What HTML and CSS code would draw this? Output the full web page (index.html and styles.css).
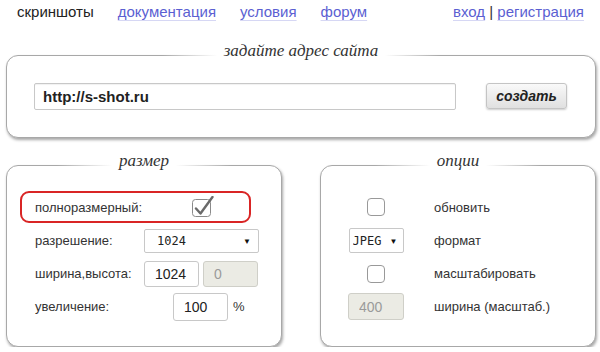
FILE: index.html
```html
<!DOCTYPE html>
<html lang="ru">
<head>
    <meta charset="UTF-8">
    <meta name="viewport" content="width=device-width, initial-scale=1.0">
    <title>s-shot.ru</title>
    <link rel="stylesheet" href="styles.css">
</head>
<body>
    <div class="nav">
        <div class="menu">
            <span class="current">скриншоты</span>
            <a href="#">документация</a>
            <a href="#">условия</a>
            <a href="#">форум</a>
        </div>
        <div class="auth"><a href="#">вход</a> | <a href="#">регистрация</a></div>
    </div>

    <div class="page">
        <div class="box">
            <div class="box-title">задайте адрес сайта</div>
            <div class="url-row">
                <input class="url-input" type="text" value="http://s-shot.ru">
                <button class="btn-create">создать</button>
            </div>
        </div>

        <div class="columns">
            <!-- size -->
            <div class="box box-size">
                <div class="box-title">размер</div>
                <div class="row row-hl">
                    <span class="label">полноразмерный:</span>
                    <span class="check">
                        <svg width="24" height="22" viewBox="0 0 24 22">
                            <rect x="2.5" y="3.5" width="18" height="17" rx="3" fill="#fff" stroke="#8a8a8a"/>
                            <path d="M6 12.5 L10.5 17.5 L22.5 1" fill="none" stroke="#6a6a6a" stroke-width="2.4" stroke-linecap="round" stroke-linejoin="round"/>
                        </svg>
                    </span>
                </div>
                <div class="row">
                    <span class="label">разрешение:</span>
                    <div class="select select-res">
                        <select><option>1024</option></select>
                    </div>
                </div>
                <div class="row">
                    <span class="label">ширина,высота:</span>
                    <input class="field field-w" type="text" value="1024">
                    <input class="field field-h" type="text" value="0" disabled>
                </div>
                <div class="row">
                    <span class="label">увеличение:</span>
                    <input class="field field-zoom" type="text" value="100">
                    <span class="unit">%</span>
                </div>
            </div>

            <!-- options -->
            <div class="box box-opts">
                <div class="box-title">опции</div>
                <div class="row row-first">
                    <div class="ctrl"><input class="cb" type="checkbox"></div>
                    <span class="opt-label">обновить</span>
                </div>
                <div class="row">
                    <div class="ctrl">
                        <div class="select select-fmt">
                            <select><option>JPEG</option></select>
                        </div>
                    </div>
                    <span class="opt-label">формат</span>
                </div>
                <div class="row">
                    <div class="ctrl"><input class="cb" type="checkbox"></div>
                    <span class="opt-label">масштабировать</span>
                </div>
                <div class="row">
                    <div class="ctrl"><input class="field field-scale" type="text" value="400" disabled></div>
                    <span class="opt-label">ширина (масштаб.)</span>
                </div>
            </div>
        </div>
    </div>
</body>
</html>
```

FILE: styles.css
```css
body {
    margin: 0;
    font-family: "Liberation Sans", Arial, sans-serif;
    color: #333;
    background: #fff;
}
.nav {
    display: flex;
    justify-content: space-between;
    padding: 3px 16px 0 17px;
    font-size: 15px;
    line-height: 18px;
}
.menu {
    display: flex;
    gap: 24px;
}
.current {
    color: #222;
}
.nav a {
    color: #5b5fd2;
    text-decoration: underline;
    text-decoration-color: rgba(91, 95, 210, 0.25);
    text-underline-offset: 3px;
}
.auth {
    color: #333;
}
.page {
    padding: 0 4px 0 6px;
}
.box {
    margin-top: 34px;
    border: 1px solid #a8a8a8;
    border-radius: 12px;
    box-shadow: 1px 2px 3px rgba(0, 0, 0, 0.35);
    padding: 0 0 27px;
    background: #fff;
}
.box-title {
    width: fit-content;
    margin: -15px auto 0;
    padding: 0 62px;
    height: 20px;
    line-height: 20px;
    font-family: "Liberation Serif", Georgia, serif;
    font-style: italic;
    font-size: 17px;
    color: #333;
    background: linear-gradient(to right, rgba(255,255,255,0) 0, #fff 55px, #fff calc(100% - 55px), rgba(255,255,255,0) 100%);
}
.url-row {
    display: flex;
    gap: 30px;
    margin-top: 22px;
    padding: 0 28px 0 27px;
}
.url-input {
    flex: 1;
    box-sizing: border-box;
    height: 27px;
    padding: 0 8px;
    border: 1px solid #c8c8c8;
    border-radius: 2px;
    box-shadow: inset 0 1px 1px rgba(0, 0, 0, 0.06);
    font-family: inherit;
    font-size: 15px;
    font-weight: bold;
    color: #222;
}
.btn-create {
    width: 81px;
    height: 26px;
    border: 1px solid #c4c4c4;
    border-radius: 3px;
    background: linear-gradient(#f9f9f9, #e0e0e0);
    box-shadow: 0 1px 2px rgba(0, 0, 0, 0.2);
    font-family: inherit;
    font-size: 14px;
    font-weight: bold;
    font-style: italic;
    color: #222;
    cursor: pointer;
}
.columns {
    display: flex;
    gap: 38px;
    margin-top: 27px;
}
.columns .box {
    flex: 1;
    margin-top: 0;
    padding: 0 0 23px;
}
.row {
    display: flex;
    align-items: center;
    height: 33px;
    font-size: 13px;
}
.box-size .row {
    padding-left: 28px;
}
.box-size .row:nth-child(3) {
    margin-top: 1px;
}
.row-hl {
    box-sizing: border-box;
    width: 231px;
    height: 32px;
    margin: 20px 0 0 13px;
    padding-left: 13px !important;
    border: 2px solid #d92525;
    border-radius: 9px;
}
.label {
    width: 109px;
    flex: none;
}
.check {
    display: flex;
    margin-left: 46px;
}
.select {
    position: relative;
}
.select select {
    appearance: none;
    -webkit-appearance: none;
    box-sizing: border-box;
    border: 1px solid #c8c8c8;
    border-radius: 2px;
    background: #fff;
    font-family: "DejaVu Sans Mono", "Liberation Mono", monospace;
    font-size: 12px;
    color: #222;
}
.select::after {
    content: "▼";
    position: absolute;
    top: 50%;
    transform: translateY(-50%);
    font-size: 8px;
    color: #111;
    pointer-events: none;
}
.select-res select {
    width: 115px;
    height: 24px;
    padding-left: 12px;
}
.select-res::after {
    right: 8px;
}
.select-fmt select {
    width: 55px;
    height: 25px;
    padding-left: 3px;
}
.select-fmt::after {
    right: 6px;
}
.field {
    box-sizing: border-box;
    height: 26px;
    padding: 0 10px;
    border: 1px solid #c8c8c8;
    border-radius: 3px;
    font-family: inherit;
    font-size: 14px;
    color: #222;
    background: #fff;
}
.field:disabled {
    background: #ebebe4;
    border-color: #cfcfc8;
    color: #9a9a9a;
}
.field-w {
    width: 55px;
}
.field-h {
    width: 55px;
    margin-left: 4px;
}
.field-zoom {
    width: 55px;
    height: 28px;
    margin-left: 29px;
}
.unit {
    margin-left: 5px;
}
.box-opts .row {
    padding-left: 19px;
}
.box-opts .row-first {
    box-sizing: border-box;
    height: 32px;
    margin-top: 20px;
}
.box-opts .row:nth-child(3) {
    margin-top: 1px;
}
.ctrl {
    display: flex;
    justify-content: center;
    width: 72px;
    flex: none;
}
.cb {
    appearance: none;
    -webkit-appearance: none;
    width: 18px;
    height: 18px;
    margin: 0;
    border: 1px solid #999;
    border-radius: 4px;
    background: #fff;
}
.field-scale {
    width: 56px;
    height: 27px;
}
.opt-label {
    margin-left: 22px;
}
```
